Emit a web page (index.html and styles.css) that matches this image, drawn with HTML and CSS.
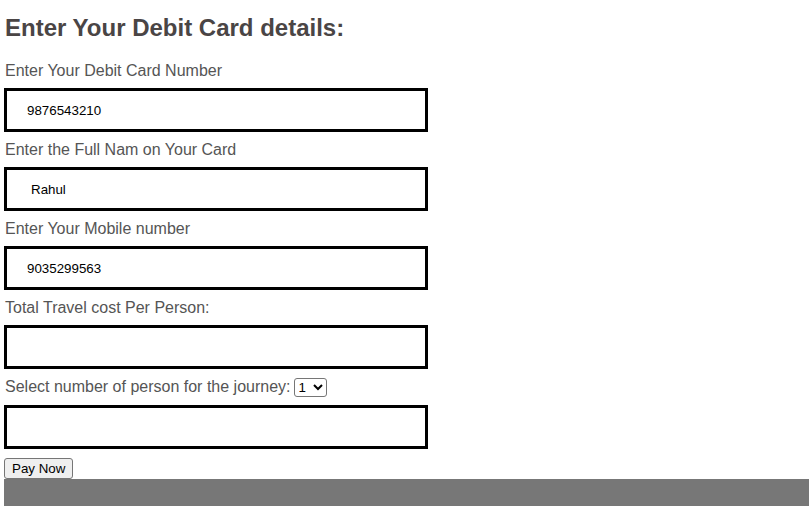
FILE: index.html
```html
<!DOCTYPE html>
<html>
<head>
<meta charset="utf-8">
<link rel="stylesheet" href="styles.css">
</head>
<body>
<h2 class="title">Enter Your Debit Card details:</h2>
<form class="form">
  <label class="label">Enter Your Debit Card Number</label>
  <input class="field" type="text" value="9876543210">
  <label class="label">Enter the Full Nam on Your Card</label>
  <input class="field field-name" type="text" value="Rahul">
  <label class="label">Enter Your Mobile number</label>
  <input class="field" type="text" value="9035299563">
  <label class="label">Total Travel cost Per Person:</label>
  <input class="field" type="text" value="">
  <label class="label label-select">Select number of person for the journey: <select class="count"><option>1</option><option>2</option><option>3</option></select></label>
  <input class="field" type="text" value="">
  <div class="actions"><button class="pay" type="button">Pay Now</button></div>
</form>
<div class="footer-bar"></div>
</body>
</html>
```
FILE: styles.css
```css
html, body {
  margin: 0;
  padding: 0;
  background: #fff;
}
body {
  margin-left: 4px;
  font-family: "Liberation Sans", Arial, sans-serif;
  overflow: hidden;
  height: 506px;
}
.title {
  margin: 14px 0 11px 1px;
  font-size: 24px;
  line-height: 28px;
  font-weight: bold;
  color: #4a4545;
}
.form {
  display: flex;
  flex-direction: column;
  align-items: flex-start;
}
.label {
  display: block;
  margin: 9px 0 8px 1px;
  font-size: 16px;
  line-height: 18px;
  color: #555;
}
.label-select {
  height: 19px;
  display: flex;
  align-items: center;
  gap: 3px;
  margin: 8px 0 9px 1px;
}
.count {
  font-family: "Liberation Sans", Arial, sans-serif;
  font-size: 13.33px;
  height: 19px;
  width: 33px;
  padding: 0;
  margin: 2px 0 0 0;
  border: 1px solid #767676;
  border-radius: 3px;
  background: #fff;
  color: #000;
}
.field {
  box-sizing: border-box;
  width: 424px;
  height: 44px;
  margin: 0;
  border: 3px solid #000;
  padding: 0 0 0 20px;
  font-family: "Liberation Sans", Arial, sans-serif;
  font-size: 13.33px;
  color: #000;
  background: #fff;
  outline: none;
}
.field-name {
  padding-left: 24px;
}
.actions {
  margin-top: 9px;
  height: 21px;
}
.pay {
  font-family: "Liberation Sans", Arial, sans-serif;
  font-size: 13.33px;
  height: 21px;
  margin: 0;
  padding: 1px 7px;
  border: 1px solid #767676;
  border-radius: 3px;
  background: #efefef;
  color: #000;
}
.footer-bar {
  height: 40px;
  background: #777;
}
```
